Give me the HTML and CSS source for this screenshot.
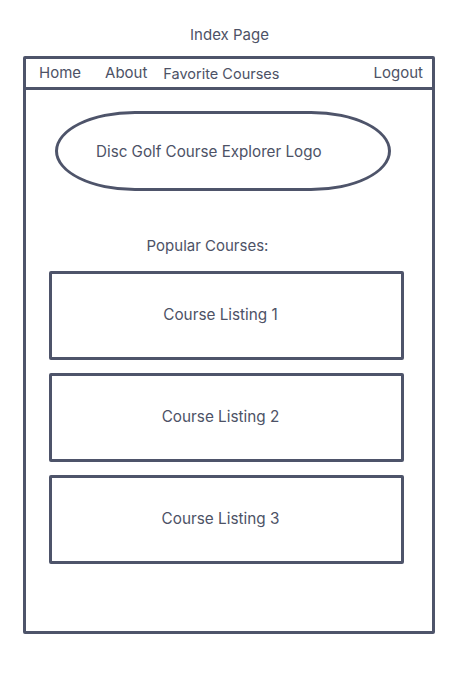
FILE: index.html
```html
<!DOCTYPE html>
<html lang="en">
<head>
    <meta charset="UTF-8">
    <meta name="viewport" content="width=device-width, initial-scale=1.0">
    <title>Index Page</title>
    <link rel="stylesheet" href="styles.css">
</head>
<body>
    <h1 class="page-title">Index Page</h1>

    <div class="frame">
        <nav class="nav">
            <a class="nav-link home" href="#">Home</a>
            <a class="nav-link" href="#">About</a>
            <a class="nav-link fav" href="#">Favorite Courses</a>
            <a class="nav-link logout" href="#">Logout</a>
        </nav>

        <main class="content">
            <div class="logo">Disc Golf Course Explorer Logo</div>

            <h2 class="section-title">Popular Courses:</h2>

            <div class="listings">
                <div class="listing">Course Listing 1</div>
                <div class="listing">Course Listing 2</div>
                <div class="listing">Course Listing 3</div>
            </div>
        </main>
    </div>
</body>
</html>
```

FILE: styles.css
```css
body {
    margin: 0;
    padding-top: 26px;
    background: #fff;
    color: #4d5266;
    font-family: Inter, "Liberation Sans", sans-serif;
    font-size: 15px;
}
.page-title {
    margin: 0 0 12px 0;
    font-size: 15px;
    font-weight: normal;
    line-height: 18px;
    text-align: center;
    padding-right: 10px;
}
.frame {
    box-sizing: border-box;
    width: 412px;
    height: 578px;
    margin-left: 23px;
    border: 3px solid #4e546a;
    border-radius: 2px;
}
.nav {
    display: flex;
    align-items: center;
    gap: 16px;
    height: 28px;
    padding: 0 9px 0 13px;
    border-bottom: 3px solid #4e546a;
}
.nav-link {
    color: #4d5266;
    text-decoration: none;
    font-size: 15px;
    line-height: 18px;
    margin-top: -1px;
}
.nav-link.home {
    margin-right: 8px;
}
.nav-link.fav {
    font-size: 14.5px;
    margin-top: 2px;
}
.nav-link.logout {
    margin-left: auto;
}
.content {
    padding: 21px 0 0 23px;
}
.logo {
    box-sizing: border-box;
    display: flex;
    align-items: center;
    width: 336px;
    height: 80px;
    margin-left: 6px;
    padding-left: 38px;
    border: 3px solid #4e546a;
    border-radius: 80px / 40px;
    font-size: 15.2px;
}
.section-title {
    margin: 46px 0 16px 0;
    font-size: 15px;
    font-weight: normal;
    line-height: 18px;
    text-align: center;
    width: 355px;
    padding-right: 38px;
    box-sizing: border-box;
}
.listings {
    display: flex;
    flex-direction: column;
    gap: 13px;
}
.listing {
    box-sizing: border-box;
    display: flex;
    align-items: center;
    justify-content: center;
    width: 355px;
    height: 89px;
    padding-right: 12px;
    padding-bottom: 2px;
    border: 3px solid #4e546a;
    border-radius: 2px;
    font-size: 15.3px;
}
```
